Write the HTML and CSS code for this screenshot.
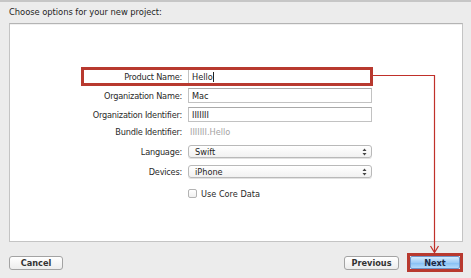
FILE: index.html
```html
<!DOCTYPE html>
<html>
<head>
<meta charset="utf-8">
<link rel="stylesheet" href="styles.css">
</head>
<body>
<div class="window">
  <div class="title">Choose options for your new project:</div>
  <div class="panel">
    <div class="form">
      <div class="row r-product">
        <label class="lbl">Product Name:</label>
        <div class="field"><span>Hello</span><span class="caret"></span></div>
      </div>
      <div class="row r-gap4">
        <label class="lbl">Organization Name:</label>
        <div class="field"><span>Mac</span></div>
      </div>
      <div class="row r-gap4">
        <label class="lbl">Organization Identifier:</label>
        <div class="field"><span>IIIIIII</span></div>
      </div>
      <div class="row r-bundle">
        <label class="lbl">Bundle Identifier:</label>
        <div class="static">IIIIIII.Hello</div>
      </div>
      <div class="row r-lang">
        <label class="lbl">Language:</label>
        <div class="popup"><span>Swift</span><svg class="updown" width="5" height="8" viewBox="0 0 5 8"><path d="M0.5 3 L2.5 0.5 L4.5 3 Z M0.5 5 L2.5 7.5 L4.5 5 Z" fill="#444"/></svg></div>
      </div>
      <div class="row r-dev">
        <label class="lbl">Devices:</label>
        <div class="popup"><span>iPhone</span><svg class="updown" width="5" height="8" viewBox="0 0 5 8"><path d="M0.5 3 L2.5 0.5 L4.5 3 Z M0.5 5 L2.5 7.5 L4.5 5 Z" fill="#444"/></svg></div>
      </div>
      <div class="row r-check">
        <span class="lbl"></span>
        <div class="check"><span class="box"></span><span>Use Core Data</span></div>
      </div>
    </div>
  </div>
  <div class="footer">
    <button class="btn btn-cancel">Cancel</button>
    <div class="right">
      <button class="btn btn-prev">Previous</button>
      <div class="next-mark"><button class="btn btn-next">Next</button></div>
    </div>
  </div>
  <div class="mark-product"></div>
  <svg class="arrow" width="471" height="278" viewBox="0 0 471 278">
    <polyline points="373,75.5 434.5,75.5 434.5,252" fill="none" stroke="#c0302a" stroke-width="1.2"/>
    <polyline points="430.5,246 434.5,252.5 438.5,246" fill="none" stroke="#c0302a" stroke-width="1.2"/>
  </svg>
</div>
</body>
</html>
```

FILE: styles.css
```css
html, body {
  margin: 0;
  padding: 0;
}
body {
  width: 471px;
  height: 278px;
  overflow: hidden;
  background: #ececec;
  font-family: "DejaVu Sans", "Liberation Sans", sans-serif;
  color: #2b2b2b;
}
.window {
  position: relative;
  width: 471px;
  height: 278px;
  display: flex;
  flex-direction: column;
  border-top: 2px solid #c6c6c6;
  box-sizing: border-box;
}
.title {
  height: 21px;
  line-height: 21px;
  padding-left: 9px;
  font-size: 8.4px;
  letter-spacing: -0.05px;
  color: #1e1e1e;
}
.panel {
  margin: 0 8px 0 9px;
  height: 219px;
  box-sizing: border-box;
  background: #fff;
  border: 1px solid #c4c4c4;
  border-top-color: #b4b4b4;
  box-shadow: inset 0 1px 0 #f0f0f0;
}
.form {
  display: flex;
  flex-direction: column;
  padding-left: 72px;
}
.row {
  display: grid;
  grid-template-columns: 100px 184px;
  column-gap: 6px;
  align-items: center;
  height: 15px;
}
.r-product { margin-top: 45px; }
.r-gap4 { margin-top: 4px; }
.r-bundle { margin-top: 2px; }
.r-lang { margin-top: 6px; height: 13px; }
.r-dev { margin-top: 7px; height: 13px; }
.r-check { margin-top: 10px; height: 11px; }
.lbl {
  text-align: right;
  font-size: 8.2px;
  letter-spacing: -0.22px;
  color: #2a2a2a;
  white-space: nowrap;
}
.field {
  height: 15px;
  box-sizing: border-box;
  border: 1px solid #c2c2c2;
  border-top-color: #a9a9a9;
  background: #fff;
  font-size: 8.2px;
  color: #1e1e1e;
  display: flex;
  align-items: center;
  padding-left: 3px;
}
.caret {
  display: inline-block;
  width: 1px;
  height: 10px;
  background: #222;
}
.static {
  font-size: 8.2px;
  color: #a3a3a3;
  padding-left: 2px;
}
.popup {
  height: 13px;
  box-sizing: border-box;
  border: 1px solid #b9b9b9;
  border-radius: 3px;
  background: linear-gradient(#ffffff, #f1f1f1);
  box-shadow: 0 1px 0 #e2e2e2;
  font-size: 8.2px;
  color: #1e1e1e;
  display: flex;
  align-items: center;
  justify-content: space-between;
  padding: 0 4px 0 6px;
}
.updown { display: block; }
.check {
  display: flex;
  align-items: center;
  gap: 4px;
  font-size: 8.2px;
  color: #2a2a2a;
}
.box {
  width: 9px;
  height: 9px;
  box-sizing: border-box;
  border: 1px solid #b3b3b3;
  border-radius: 2px;
  background: linear-gradient(#ffffff, #f0f0f0);
}
.footer {
  display: flex;
  justify-content: space-between;
  align-items: center;
  height: 25px;
  padding: 8px 8px 0 9px;
}
.right {
  display: flex;
  align-items: center;
  gap: 8px;
}
.btn {
  height: 14px;
  box-sizing: border-box;
  border: 1px solid #a3a3a3;
  border-radius: 3px;
  background: linear-gradient(#ffffff, #ededed);
  font-family: "DejaVu Sans", "Liberation Sans", sans-serif;
  font-size: 8.2px;
  font-weight: bold;
  color: #333;
  padding: 0;
  line-height: 12px;
}
.btn-cancel { width: 54px; }
.btn-prev { width: 55px; }
.next-mark {
  border: 3px solid #b8392f;
  width: 56px;
  height: 19px;
  box-sizing: border-box;
  display: flex;
}
.btn-next {
  width: 50px;
  height: 13px;
  border-color: #6e95c9;
  border-radius: 2px;
  background: linear-gradient(#d6ebfd, #9fcdf6 50%, #86c0f4 55%, #b6dcfa);
  color: #1d2a44;
}
.mark-product {
  position: absolute;
  left: 81px;
  top: 65px;
  width: 292px;
  height: 19px;
  box-sizing: border-box;
  border: 3px solid #b8392f;
}
.arrow {
  position: absolute;
  left: 0;
  top: -2px;
  pointer-events: none;
}
```
